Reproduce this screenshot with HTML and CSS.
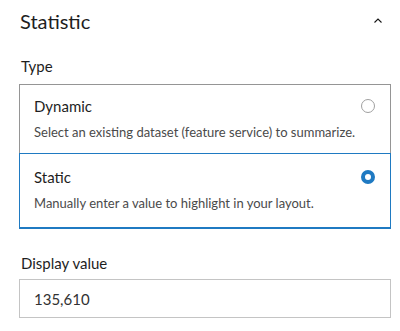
FILE: index.html
```html
<!DOCTYPE html>
<html lang="en">
<head>
  <meta charset="UTF-8">
  <title>Statistic</title>
  <link rel="stylesheet" href="styles.css">
</head>
<body>
  <div class="panel">
    <div class="panel-header">
      <h2>Statistic</h2>
      <svg class="chevron" width="12" height="12" viewBox="0 0 12 12">
        <path d="M2.5 7.5 L6 4 L9.5 7.5" fill="none" stroke="#151515" stroke-width="1.1"/>
      </svg>
    </div>

    <div class="field">
      <div class="field-label">Type</div>
      <div class="radio-cards">
        <label class="radio-card">
          <div class="card-top">
            <span class="card-title">Dynamic</span>
            <span class="radio"></span>
          </div>
          <div class="card-desc">Select an existing dataset (feature service) to summarize.</div>
        </label>
        <label class="radio-card selected">
          <div class="card-top">
            <span class="card-title">Static</span>
            <span class="radio checked"></span>
          </div>
          <div class="card-desc">Manually enter a value to highlight in your layout.</div>
        </label>
      </div>
    </div>

    <div class="field value-field">
      <div class="field-label">Display value</div>
      <input class="text-input" type="text" value="135,610">
    </div>
  </div>
</body>
</html>
```

FILE: styles.css
```css
/* General */
body {
  margin: 0;
  font-family: Lato, "Open Sans", sans-serif;
  background-color: white;
  color: #1e1e1e;
}

.panel {
  padding: 0 9px 0 19px;
}

/* Header */
.panel-header {
  display: flex;
  justify-content: space-between;
  align-items: center;
  height: 42px;
}

.panel-header h2 {
  margin: 0;
  font-size: 20px;
  font-weight: normal;
  padding-left: 1px;
}

.chevron {
  margin-right: 7px;
}

/* Fields */
.field {
  margin-top: 14px;
}

.value-field {
  margin-top: 24px;
}

.field-label {
  font-size: 15px;
  padding-left: 2px;
  margin-bottom: 8px;
  line-height: 20px;
}

.value-field .field-label {
  margin-bottom: 6px;
}

/* Radio cards */
.radio-cards {
  display: flex;
  flex-direction: column;
}

.radio-card {
  display: block;
  border: 1px solid #959595;
  padding: 11px 14px 13px 14px;
  height: 44px;
}

.radio-card.selected {
  border: 1px solid #1f7ac2;
  box-shadow: inset 0 -1px 0 #1f7ac2;
  margin-top: -1px;
  height: 48px;
  padding-top: 13px;
}

.card-top {
  display: flex;
  justify-content: space-between;
  align-items: center;
}

.card-title {
  font-size: 15px;
  line-height: 20px;
}

.card-desc {
  margin-top: 8px;
  font-size: 13px;
  color: #4a4a4a;
  line-height: 16px;
}

.radio {
  width: 14px;
  height: 14px;
  border: 1px solid #a0a0a0;
  border-radius: 50%;
  box-sizing: border-box;
  margin-right: 1px;
}

.radio.checked {
  border: 4px solid #1f7ac2;
  background-color: white;
}

/* Input */
.text-input {
  display: block;
  width: 100%;
  height: 39px;
  box-sizing: border-box;
  border: 1px solid #c4c4c4;
  padding: 0 14px;
  font-family: Lato, "Open Sans", sans-serif;
  font-size: 15px;
  color: #323232;
}
```
